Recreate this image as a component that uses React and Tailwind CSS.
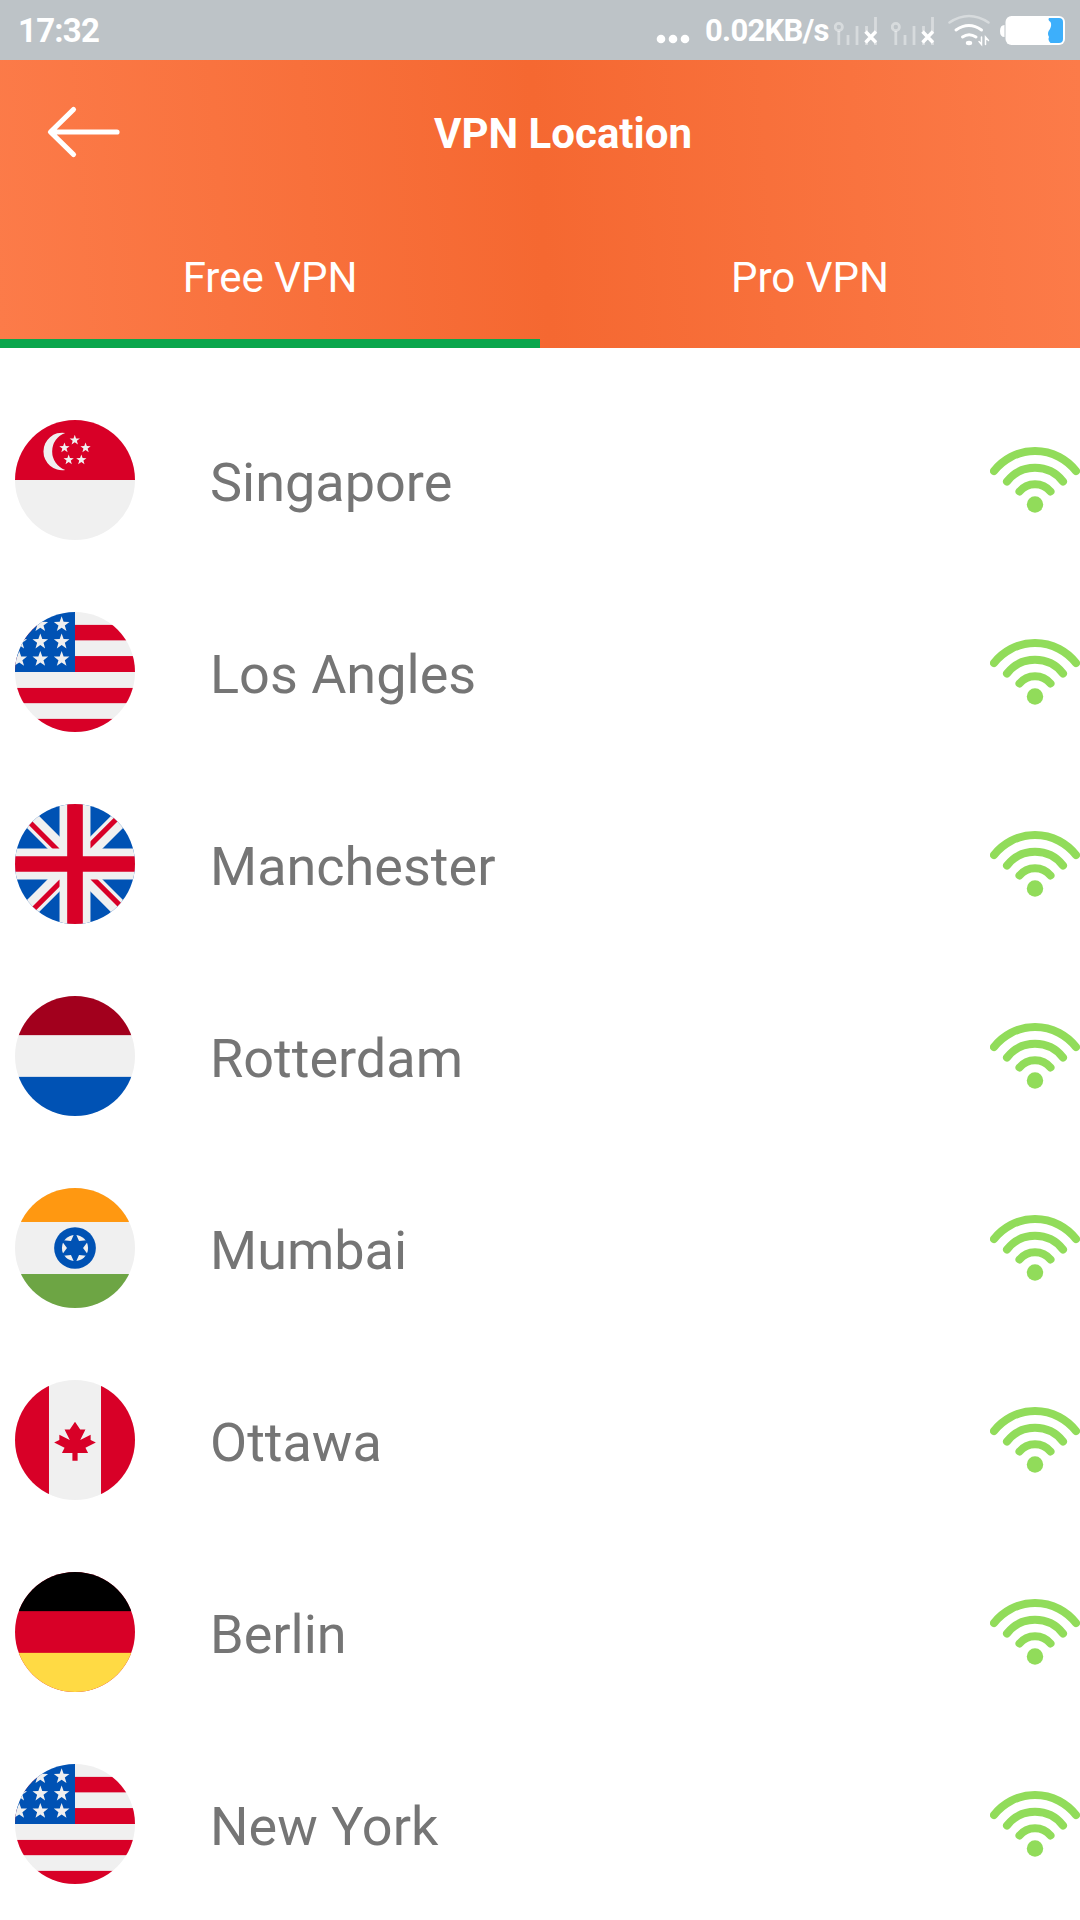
import React from "react";

const WHITE = "#f0f0f0";
const RED = "#d80027";
const BLUE = "#0052b4";

function Star({ x, y, r }) {
  const points = Array.from({ length: 10 }, (_, i) => {
    const d = i % 2 ? r * 0.41 : r;
    const a = (Math.PI / 5) * i - Math.PI / 2;
    return `${(x + d * Math.cos(a)).toFixed(1)},${(y + d * Math.sin(a)).toFixed(1)}`;
  }).join(" ");
  return <polygon points={points} fill={WHITE} />;
}

function Singapore() {
  return (
    <>
      <rect width="512" height="512" fill={WHITE} />
      <rect width="512" height="256" fill={RED} />
      <path d="M214 55A80 80 0 1 0 214 213A84 84 0 0 1 214 55Z" fill={WHITE} />
      <Star x={255} y={86} r={23} />
      <Star x={211} y={119} r={23} />
      <Star x={301} y={119} r={23} />
      <Star x={229} y={170} r={23} />
      <Star x={283} y={170} r={23} />
    </>
  );
}

function Usa() {
  return (
    <>
      <rect width="512" height="512" fill={WHITE} />
      <rect y="55" width="512" height="66" fill={RED} />
      <rect y="188" width="512" height="68" fill={RED} />
      <rect y="324" width="512" height="65" fill={RED} />
      <rect y="456" width="512" height="56" fill={RED} />
      <rect width="256" height="256" fill={BLUE} />
      {[53, 127, 201].map((y) =>
        [18, 108, 199].map((x) => <Star key={`${x}-${y}`} x={x} y={y} r={35} />)
      )}
    </>
  );
}

function Uk() {
  return (
    <>
      <rect width="512" height="512" fill={BLUE} />
      <path d="M0 0L512 512M512 0L0 512" stroke={WHITE} strokeWidth="73" />
      <path
        d="M0 0L256 256V287L0 31ZM512 0L256 256V225L481 0ZM0 512L256 256V287L31 512ZM512 512L256 256V225L512 481Z"
        fill={RED}
      />
      <path d="M190 0H322V512H190ZM0 190H512V322H0Z" fill={WHITE} />
      <path d="M222.6 0H289.4V512H222.6ZM0 222.6H512V289.4H0Z" fill={RED} />
    </>
  );
}

function Bands({ top, middle, bottom, edge = 167 }) {
  return (
    <>
      <rect width="512" height="512" fill={middle} />
      <rect width="512" height={edge} fill={top} />
      <rect y={512 - edge} width="512" height={edge} fill={bottom} />
    </>
  );
}

function India() {
  return (
    <>
      <Bands top="#ff9811" middle={WHITE} bottom="#6da544" edge={145} />
      <circle cx="256" cy="256" r="89" fill={BLUE} />
      <circle cx="256" cy="256" r="55.7" fill={WHITE} />
      <polygon
        fill={BLUE}
        points="256,187.3 273.2,226.3 315.5,221.7 290.3,256 315.5,290.3 273.2,285.7 256,324.7 238.8,285.7 196.5,290.3 221.7,256 196.5,221.7 238.8,226.3"
      />
    </>
  );
}

function Canada() {
  return (
    <>
      <rect width="512" height="512" fill={WHITE} />
      <rect width="145" height="512" fill={RED} />
      <rect x="367" width="145" height="512" fill={RED} />
      <polygon
        fill={RED}
        points="300.5,289.4 345,267.1 322.8,256 322.8,233.7 278.3,256 300.5,211.5 278.3,211.5 256,178.1 233.7,211.5 211.5,211.5 233.7,256 189.2,233.7 189.2,256 167,267.1 211.5,289.4 200.3,311.7 244.9,311.7 244.9,345 267.1,345 267.1,311.7 311.7,311.7"
      />
    </>
  );
}

const locations = [
  { name: "Singapore", flag: <Singapore /> },
  { name: "Los Angles", flag: <Usa /> },
  { name: "Manchester", flag: <Uk /> },
  { name: "Rotterdam", flag: <Bands top="#a2001d" middle={WHITE} bottom={BLUE} /> },
  { name: "Mumbai", flag: <India /> },
  { name: "Ottawa", flag: <Canada /> },
  { name: "Berlin", flag: <Bands top="#000000" middle={RED} bottom="#ffda44" /> },
  { name: "New York", flag: <Usa /> },
];

function Wifi() {
  return (
    <svg className="size-[90px] shrink-0" viewBox="0 0 90 90" fill="none" stroke="#91dc5a" strokeWidth="8" strokeLinecap="round">
      <path d="M4 36A52 52 0 0 1 86 36" />
      <path d="M17 46.5A35.5 35.5 0 0 1 73 46.5" />
      <path d="M29.5 56.5A20 20 0 0 1 60.5 56.5" />
      <circle cx="45" cy="69.5" r="8.2" fill="#91dc5a" stroke="none" />
    </svg>
  );
}

function Signal() {
  return (
    <svg className="h-[60px] w-[44px] shrink-0" viewBox="0 0 44 60" fill="none" stroke="#fff">
      <g strokeOpacity="0.4" strokeWidth="2.8">
        <circle cx="4.8" cy="27" r="3.6" />
        <path d="M4.8 31V45M14 35V45M23 26V45M32.5 26V31M32.5 42V45M41.5 17V32M41.5 42V45" />
      </g>
      <path d="M31.5 31.5L42 42.5M42 31.5L31.5 42.5" strokeWidth="3.4" />
    </svg>
  );
}

function StatusBar() {
  return (
    <div className="flex h-[60px] items-center bg-[#bdc3c7] pl-[18px] font-bold text-white">
      <span className="pt-[2px] text-[33px] leading-[58px] tracking-[-0.8px]">17:32</span>
      <svg className="ml-auto h-[60px] w-[34px]" viewBox="0 0 34 60" fill="#fff">
        <circle cx="5" cy="39" r="4.3" />
        <circle cx="17" cy="39" r="4.3" />
        <circle cx="29" cy="39" r="4.3" />
      </svg>
      <span className="ml-[15px] w-[129px] pt-[2px] text-[31px] leading-[58px] tracking-[-0.7px] whitespace-nowrap">0.02KB/s</span>
      <Signal />
      <div className="w-[13px]" />
      <Signal />
      <svg className="ml-[12px] h-[60px] w-[44px]" viewBox="0 0 44 60" fill="none" stroke="#fff" strokeWidth="3" strokeLinecap="round">
        <path d="M2.5 22.5Q22 9.5 41.5 22.5" strokeOpacity="0.4" strokeWidth="2.6" />
        <path d="M9 30Q22 21 34.5 30" />
        <path d="M15.5 37Q22 32.5 29 37" />
        <ellipse cx="22" cy="43" rx="3.2" ry="2.2" fill="#fff" stroke="none" />
        <path d="M34.5 37V44.5L32 41.5M38.5 44.5V37L41.5 40.5" strokeWidth="1.5" />
      </svg>
      <svg className="mr-[14px] ml-[9px] h-[60px] w-[66px]" viewBox="0 0 66 60">
        <path d="M4.5 25Q0 25 0 31Q0 37 4.5 37Z" fill="#fff" />
        <rect x="5.5" y="16" width="59.5" height="29" rx="6" fill="#fff" />
        <path d="M49 18H59Q63 18 63 22V39Q63 43 59 43H50.5Q47.5 40 49 37Q46.5 33 50 29Q52 25 50.5 22Q47.5 20 49 18Z" fill="#3daffb" />
      </svg>
    </div>
  );
}

export default function App() {
  return (
    <div className="h-[1920px] w-[1080px] overflow-hidden bg-white font-['Roboto',sans-serif]">
      <StatusBar />
      <header className="flex h-[288px] flex-col bg-[linear-gradient(86deg,#fc7b49_0%,#f56831_50%,#fc7b49_100%)] text-white">
        <div className="flex h-[144px] items-center">
          <svg className="ml-[46px] h-[60px] w-[76px]" viewBox="0 0 76 60" fill="none" stroke="#fff" strokeWidth="5.2" strokeLinecap="round" strokeLinejoin="round">
            <path d="M71 30H5M27.5 7.5L4.5 30L27.5 52.5" />
          </svg>
          <h1 className="ml-[312px] pt-[4px] text-[42px] leading-[48px] font-bold whitespace-nowrap">VPN Location</h1>
        </div>
        <nav className="grid h-[144px] grid-cols-2 text-[42px]">
          <div className="flex items-center justify-center border-b-[9px] border-[#0aa64c] pt-[11px]">Free VPN</div>
          <div className="flex items-center justify-center border-b-[9px] border-transparent pt-[11px]">Pro VPN</div>
        </nav>
      </header>
      <main className="pt-9">
        {locations.map(({ name, flag }) => (
          <div key={name} className="flex h-48 items-center pl-[15px]">
            <svg className="size-[120px] shrink-0 overflow-hidden rounded-full" viewBox="0 0 512 512">
              {flag}
            </svg>
            <span className="ml-[75px] flex-1 pt-1.5 text-[54px] leading-[64px] text-[#757575]">{name}</span>
            <Wifi />
          </div>
        ))}
      </main>
    </div>
  );
}
